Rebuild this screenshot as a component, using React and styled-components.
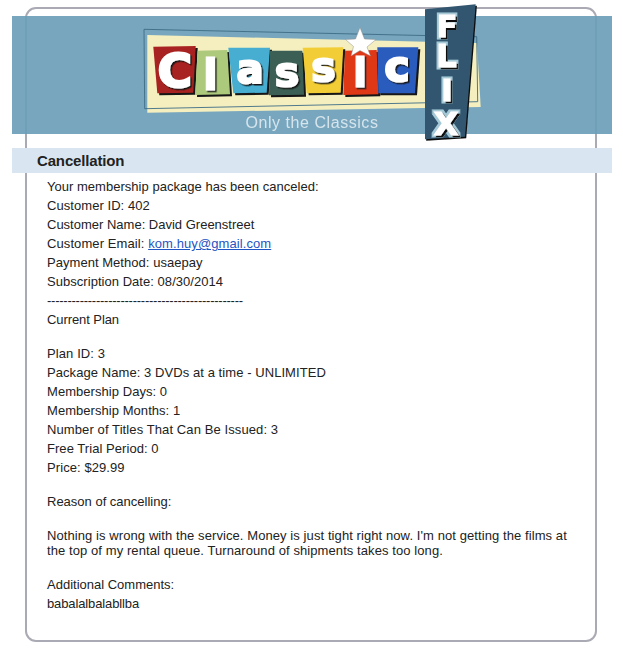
import React from "react";
import styled, { createGlobalStyle } from "styled-components";

const Global = createGlobalStyle`
  html, body { margin: 0; padding: 0; background: #fff; }
  body { font-family: "Liberation Sans", Arial, sans-serif; color: #222; }
`;
const Page = styled.div`
  padding: 7px 26px 15px 25px;
`;
const Card = styled.main`
  border: 2px solid #aaaab4;
  border-radius: 11px;
  height: 631px;
`;
const Banner = styled.header`
  position: relative;
  margin: 7px -17px 0 -15px;
  height: 118px;
  background: rgba(107, 158, 184, 0.92);
`;
const LogoArt = styled.svg`
  position: absolute;
  left: 118px;
  top: -16px;
  width: 360px;
  height: 150px;
`;
const Heading = styled.h1`
  margin: 14px -17px 0 -15px;
  padding: 0 0 0 25px;
  height: 25px;
  background: #d9e6f1;
  font-size: 15px;
  line-height: 25px;
  font-weight: bold;
  letter-spacing: -0.15px;
  color: #222;
`;
const Body = styled.section`
  padding: 6px 20px 0 20px;
  font-size: 13px;
  line-height: 15px;
`;
const Row = styled.div`
  padding-bottom: 4px;
  margin-top: ${(p) => (p.$gap ? "15px" : "0")};
  letter-spacing: ${(p) => p.$track || 0}px;
`;
const Mail = styled.a`
  color: #1f55c4;
  text-decoration: underline;
`;

const tiles = [
  { pts: "153.3,46.7 195.7,46 193.3,92.7 157.3,93.3", fill: "#a92420" },
  { pts: "197.7,50.7 227.3,50 230,94.3 195,95", fill: "#adc97c" },
  { pts: "228.3,47.7 270,47.7 266.7,92.7 233.3,93.3", fill: "#46aed2" },
  { pts: "270,50.7 302.3,50.7 304,94.7 269,95.3", fill: "#3a5f54" },
  { pts: "302.7,47.7 343.3,47.3 340.7,92.7 306.7,93.3", fill: "#f2cd35" },
  { pts: "345,50.7 376.7,50 378.3,94.3 343.3,95", fill: "#df3719" },
  { pts: "377.3,47.3 418.3,47.3 415,93.3 378.3,93.3", fill: "#2c5bbd" },
];
const letters = [
  { ch: "C", x: 174.7, y: 86.5, size: 47, w: 2.2 },
  { ch: "I", x: 210.5, y: 90, size: 44, w: 1 },
  { ch: "a", x: 250, y: 82.5, size: 40, w: 2.2 },
  { ch: "s", x: 287, y: 85.5, size: 41, w: 2.2 },
  { ch: "s", x: 323.5, y: 80.5, size: 41, w: 2.2 },
  { ch: "I", x: 360, y: 86.5, size: 42, w: 1 },
  { ch: "c", x: 397, y: 80.5, size: 43, w: 2.2 },
];
const flix = [
  { ch: "F", x: 447, y: 36.5, size: 30 },
  { ch: "L", x: 446.5, y: 66.5, size: 32 },
  { ch: "I", x: 447, y: 100.5, size: 31 },
  { ch: "X", x: 446, y: 134.5, size: 32 },
];

function Logo() {
  return (
    <LogoArt viewBox="130 0 360 150" aria-label="Classic Flix">
      <defs>
        <filter id="soft" x="-5%" y="-5%" width="110%" height="110%">
          <feGaussianBlur stdDeviation="0.3" />
        </filter>
        <filter id="tileShadow" x="-20%" y="-20%" width="140%" height="140%">
          <feDropShadow dx="1.5" dy="1.5" stdDeviation="0.2" floodColor="#151515" />
        </filter>
        <filter id="signLetter" x="-40%" y="-40%" width="180%" height="180%">
          <feMorphology in="SourceAlpha" operator="dilate" radius="2" result="fat" />
          <feFlood floodColor="#a5c9d6" />
          <feComposite in2="fat" operator="in" result="rim" />
          <feOffset in="SourceAlpha" dx="1.5" dy="1.5" result="off" />
          <feFlood floodColor="#111" />
          <feComposite in2="off" operator="in" result="shade" />
          <feMerge>
            <feMergeNode in="rim" />
            <feMergeNode in="shade" />
            <feMergeNode in="SourceGraphic" />
          </feMerge>
        </filter>
      </defs>
      <g filter="url(#soft)" fontFamily="'DejaVu Sans', Verdana, sans-serif" fontWeight="bold">
        <polygon points="147.3,35 477,43 480.7,107 147.3,112.7" fill="#f5efbf" />
        <polygon points="144,29.3 476.7,36.7 477.7,101.7 144.7,108.7" fill="none" stroke="#3d6c86" strokeWidth="0.9" />
        {tiles.map((t) => (
          <g key={t.pts}>
            <polygon points={t.pts} fill="#151515" transform="translate(2 2)" />
            <polygon points={t.pts} fill={t.fill} />
          </g>
        ))}
        {letters.map((l, i) => (
          <text
            key={i}
            x={l.x}
            y={l.y}
            textAnchor="middle"
            fontSize={l.size}
            fill="#fff"
            stroke="#fff"
            strokeWidth={l.w}
            filter="url(#tileShadow)"
          >
            {l.ch}
          </text>
        ))}
        <polygon
          points="360,27.5 364.5,39 376,39.5 367,47 370.5,56 360,50.5 351,56 353.5,46.5 345.5,39.5 355.5,39"
          fill="#fff"
          stroke="#8f8f8f"
          strokeWidth="0.5"
        />
        <text
          x="245.5"
          y="128"
          fontFamily="'Liberation Sans', Arial, sans-serif"
          fontSize="16"
          fontWeight="normal"
          letterSpacing="0.55"
          fill="#d6e5ec"
        >
          Only the Classics
        </text>
        <polygon points="425,9.3 475.7,4.3 465,136.7 425,139.3" fill="#0c0c0c" transform="translate(1.2 1.5)" />
        <polygon points="425,9.3 475.7,4.3 465,136.7 425,139.3" fill="#31566f" />
        {flix.map((l) => (
          <text
            key={l.ch}
            x={l.x}
            y={l.y}
            textAnchor="middle"
            fontSize={l.size}
            fill="#fff"
            stroke="#fff"
            strokeWidth="1.2"
            filter="url(#signLetter)"
          >
            {l.ch}
          </text>
        ))}
      </g>
    </LogoArt>
  );
}

export default function App() {
  return (
    <>
      <Global />
      <Page>
        <Card>
          <Banner>
            <Logo />
          </Banner>
          <Heading>Cancellation</Heading>
          <Body>
            <Row $track={0.025}>Your membership package has been canceled:</Row>
            <Row $track={0.06}>Customer ID: 402</Row>
            <Row>Customer Name: David Greenstreet</Row>
            <Row $track={0.09}>
              Customer Email: <Mail href="#">kom.huy@gmail.com</Mail>
            </Row>
            <Row $track={0.04}>Payment Method: usaepay</Row>
            <Row $track={0.04}>Subscription Date: 08/30/2014</Row>
            <Row $track={-0.25}>------------------------------------------------</Row>
            <Row $track={-0.08}>Current Plan</Row>
            <Row $gap $track={0.1}>Plan ID: 3</Row>
            <Row $track={0.07}>Package Name: 3 DVDs at a time - UNLIMITED</Row>
            <Row $track={0.05}>Membership Days: 0</Row>
            <Row $track={0.05}>Membership Months: 1</Row>
            <Row $track={0.1}>Number of Titles That Can Be Issued: 3</Row>
            <Row $track={0.05}>Free Trial Period: 0</Row>
            <Row $track={0.08}>Price: $29.99</Row>
            <Row $gap>Reason of cancelling:</Row>
            <Row $gap $track={0.085}>
              Nothing is wrong with the service. Money is just tight right now. I'm not getting the films at the top of my rental queue. Turnaround of shipments takes too long.
            </Row>
            <Row $gap>Additional Comments:</Row>
            <Row $track={-0.12}>babalalbalabllba</Row>
          </Body>
        </Card>
      </Page>
    </>
  );
}
